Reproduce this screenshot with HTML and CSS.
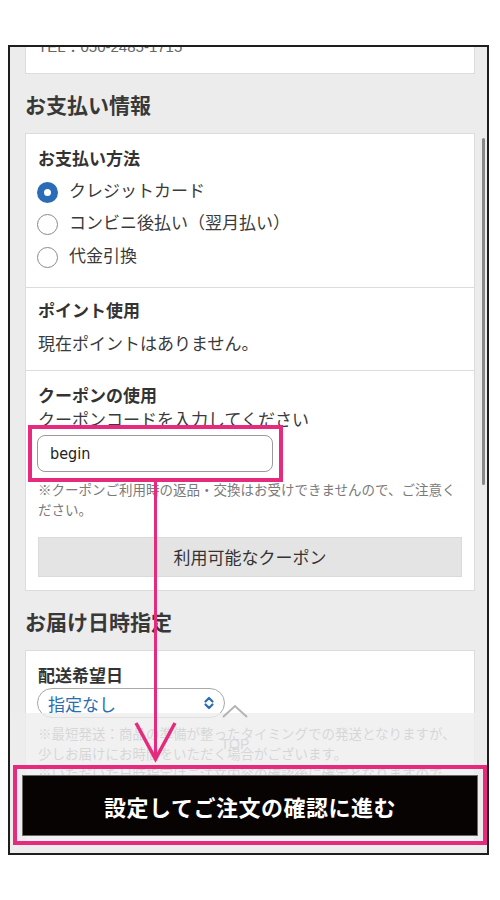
FILE: index.html
```html
<!DOCTYPE html>
<html lang="ja">
<head>
<meta charset="utf-8">
<title>お支払い情報</title>
<link rel="stylesheet" href="styles.css">
</head>
<body>
<div class="phone">
  <div class="screen">
    <div class="card card-top"><p class="tel">TEL：050-2485-1715</p></div>
    <h2 class="sec-title">お支払い情報</h2>
    <div class="card">
      <div class="sec sec-pay">
        <div class="label">お支払い方法</div>
        <div class="radio-row"><span class="radio on"></span><span class="radio-text">クレジットカード</span></div>
        <div class="radio-row"><span class="radio"></span><span class="radio-text">コンビニ後払い（翌月払い）</span></div>
        <div class="radio-row"><span class="radio"></span><span class="radio-text">代金引換</span></div>
      </div>
      <div class="sec sec-point">
        <div class="label">ポイント使用</div>
        <p class="text text-point">現在ポイントはありません。</p>
      </div>
      <div class="sec sec-coupon">
        <div class="label">クーポンの使用</div>
        <p class="text">クーポンコードを入力してください</p>
        <div class="input">begin</div>
        <p class="note">※クーポンご利用時の返品・交換はお受けできませんので、ご注意ください。</p>
        <div class="btn-gray">利用可能なクーポン</div>
      </div>
    </div>
    <h2 class="sec-title">お届け日時指定</h2>
    <div class="card">
      <div class="sec sec-date">
        <div class="label">配送希望日</div>
        <div class="select">
          <span>指定なし</span>
          <svg class="chev" width="12" height="14" viewBox="0 0 12 14"><path d="M2.5 5.5 L6 2 L9.5 5.5 M2.5 8.5 L6 12 L9.5 8.5" fill="none" stroke="#2a6db5" stroke-width="2.2" stroke-linecap="round" stroke-linejoin="round"/></svg>
        </div>
        <p class="note note-date">※最短発送：商品の準備が整ったタイミングでの発送となりますが、少しお届けにお時間をいただく場合がございます。<br>※いただいた日時指定はご注文内容の確認後に確定となりますので、ご了承ください。</p>
      </div>
    </div>
  </div>
  <div class="scrollbar"></div>
  <div class="to-top">
    <svg width="28" height="14" viewBox="0 0 28 14"><path d="M2 13 L14 2 L26 13" fill="none" stroke="#b4b4b4" stroke-width="2"/></svg>
    <span class="to-top-text">TOP</span>
  </div>
  <div class="footer">
    <div class="btn-black">設定してご注文の確認に進む</div>
  </div>
</div>
<svg class="annot" width="500" height="900" viewBox="0 0 500 900">
  <rect x="30" y="427" width="251" height="53" fill="none" stroke="#e62a7d" stroke-width="4"/>
  <rect x="15" y="767" width="470" height="76" fill="none" stroke="#e62a7d" stroke-width="4"/>
  <line x1="155.5" y1="482" x2="155.5" y2="756" stroke="#e62a7d" stroke-width="3"/>
  <polyline points="136,723 155.5,759 175,723" fill="none" stroke="#e62a7d" stroke-width="3.5"/>
</svg>
</body>
</html>
```

FILE: styles.css
```css
html, body {
  margin: 0;
  padding: 0;
}
body {
  width: 500px;
  height: 900px;
  background: #fff;
  position: relative;
  overflow: hidden;
  font-family: "Noto Sans CJK JP", "Noto Sans", sans-serif;
  color: #3a3a3a;
}
.phone {
  width: 477px;
  height: 806px;
  border: 2px solid #1e1e1e;
  margin: 45px 0 0 8px;
  position: relative;
  overflow: hidden;
  background: #ececec;
}
.screen {
  margin-top: -11px;
  padding: 0 12px 0 15px;
}
.card {
  background: #fff;
  border: 1px solid #dcdcdc;
}
.card-top {
  padding: 0 12px 16px;
}
.tel {
  margin: 0;
  font-family: "Liberation Sans", "Noto Sans CJK JP", sans-serif;
  font-size: 15px;
  line-height: 20px;
  color: #666;
}
.sec-title {
  margin: 0;
  padding: 16px 0 15px;
  font-size: 21px;
  line-height: 28px;
  font-weight: 700;
  color: #383838;
}
.sec {
  padding: 0 12px;
}
.sec + .sec {
  border-top: 1px solid #dcdcdc;
}
.label {
  font-size: 17px;
  line-height: 24px;
  font-weight: 700;
  color: #333;
}
.text {
  margin: 0;
  font-size: 17px;
  line-height: 24px;
  color: #3a3a3a;
}
.sec-pay {
  padding-top: 12px;
  padding-bottom: 13px;
}
.sec-pay .label {
  margin-bottom: 6px;
}
.radio-row {
  height: 32.5px;
  display: flex;
  align-items: center;
  gap: 11px;
  font-size: 17px;
  color: #3a3a3a;
}
.radio-text {
  line-height: 24px;
  margin-bottom: 5px;
}
.radio {
  width: 21px;
  height: 21px;
  box-sizing: border-box;
  border-radius: 50%;
  border: 1.5px solid #8a8a8a;
  background: #fff;
  margin-left: -1px;
  flex: none;
}
.radio.on {
  border: 7px solid #2a6cb6;
}
.sec-point {
  padding-top: 10px;
  padding-bottom: 15px;
}
.text-point {
  margin-top: 9px;
}
.sec-coupon {
  padding-top: 12px;
  padding-bottom: 13px;
}
.input {
  margin: 4px 0 0 -1px;
  width: 236px;
  height: 37px;
  box-sizing: border-box;
  border: 1px solid #9a9a9a;
  border-radius: 8px;
  padding-left: 12px;
  display: flex;
  align-items: center;
  font-family: "Liberation Sans Narrow", "DejaVu Sans Condensed", "Liberation Sans", sans-serif;
  font-stretch: condensed;
  font-size: 16px;
  color: #222;
}
.note {
  margin: 7px 0 0;
  font-size: 13.5px;
  line-height: 20px;
  color: #7a7a7a;
}
.btn-gray {
  margin-top: 18px;
  height: 40px;
  box-sizing: border-box;
  background: #e4e4e4;
  border: 1px solid #dadada;
  display: flex;
  align-items: center;
  justify-content: center;
  font-size: 17px;
  color: #333;
}
.sec-date {
  padding-top: 12px;
  padding-bottom: 40px;
}
.select {
  margin-top: 1.5px;
  width: 188px;
  height: 30px;
  box-sizing: border-box;
  border: 1px solid #a8a8a8;
  border-radius: 15px;
  margin-left: -1px;
  padding: 0 9px 0 10px;
  display: flex;
  align-items: center;
  justify-content: space-between;
  font-size: 17px;
  color: #2a6db5;
}
.chev {
  display: block;
}
.note-date {
  margin-top: 5px;
}
.scrollbar {
  position: absolute;
  left: 472px;
  top: 91px;
  width: 3px;
  height: 347px;
  border-radius: 2px;
  background: #888;
}
.footer {
  position: absolute;
  left: 0;
  right: 0;
  bottom: 0;
  height: 140px;
  box-sizing: border-box;
  background: rgba(238, 238, 238, 0.8);
  display: flex;
  align-items: flex-end;
  padding: 0 9px 17px 12px;
  z-index: 2;
}
.btn-black {
  flex: 1;
  height: 61px;
  box-sizing: border-box;
  background: #070303;
  border: 1px solid #6a6a6a;
  color: #fff;
  display: flex;
  align-items: center;
  justify-content: center;
  font-size: 22px;
  font-weight: 700;
  letter-spacing: 0.5px;
}
.to-top {
  position: absolute;
  left: 211px;
  top: 657px;
  width: 28px;
  display: flex;
  flex-direction: column;
  align-items: center;
  z-index: 3;
}
.to-top svg {
  display: block;
}
.to-top-text {
  margin-top: 18px;
  font-family: "Liberation Sans", sans-serif;
  font-size: 14px;
  line-height: 16px;
  color: #d8d8d8;
}
.annot {
  position: absolute;
  left: 0;
  top: 0;
  z-index: 5;
  pointer-events: none;
}
```
